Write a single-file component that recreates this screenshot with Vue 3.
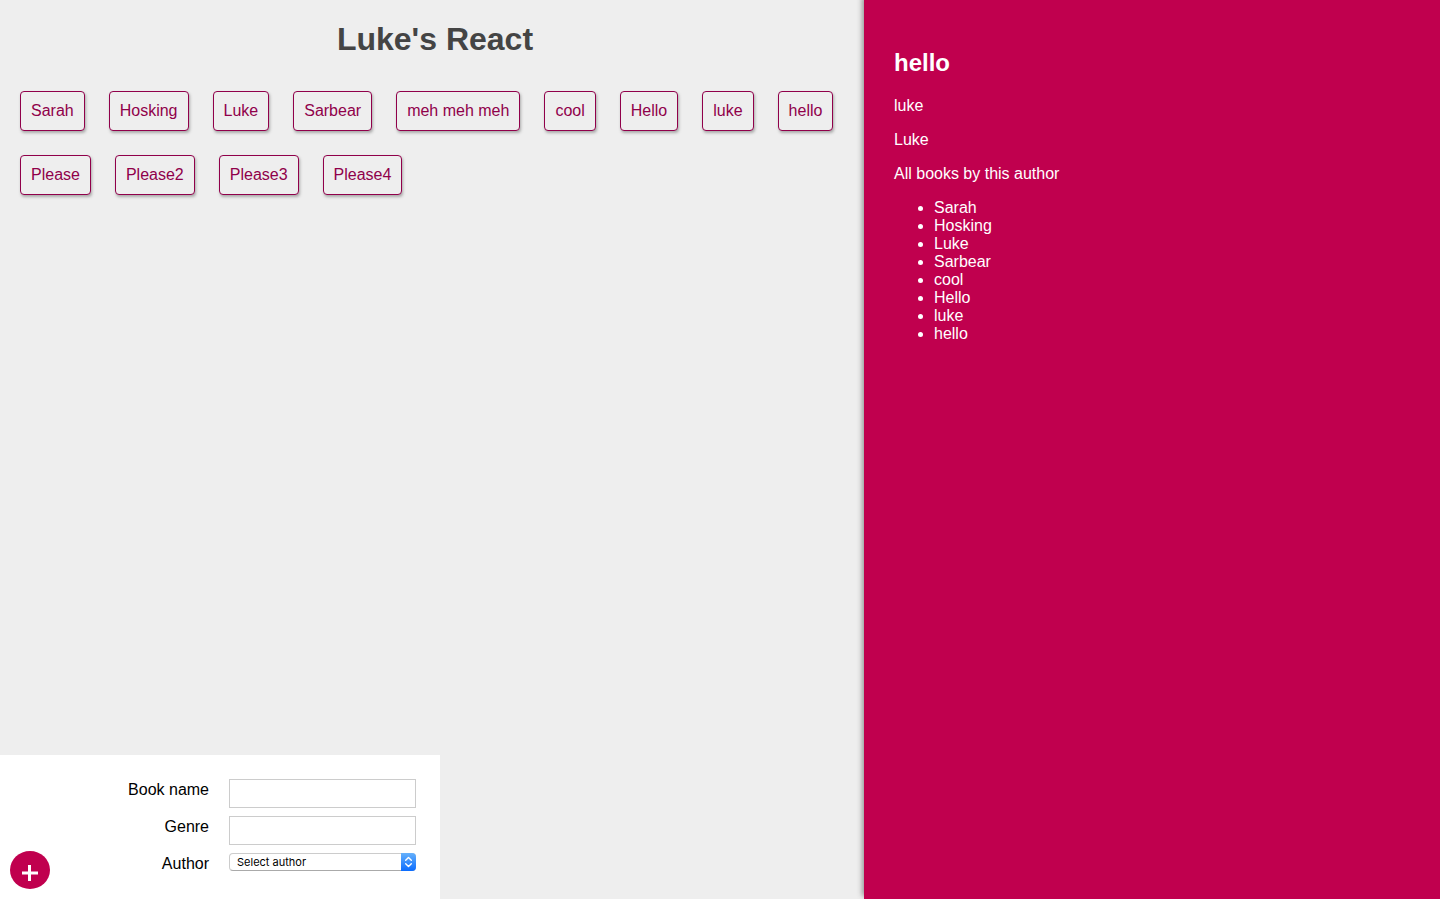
<script setup>
import { ref } from 'vue'

const books = ref([
  'Sarah', 'Hosking', 'Luke', 'Sarbear', 'meh meh meh', 'cool', 'Hello',
  'luke', 'hello', 'Please', 'Please2', 'Please3', 'Please4',
])
const selected = ref({
  name: 'hello',
  genre: 'luke',
  author: 'Luke',
  books: ['Sarah', 'Hosking', 'Luke', 'Sarbear', 'cool', 'Hello', 'luke', 'hello'],
})
const name = ref('')
const genre = ref('')
const author = ref('')
</script>

<template>
  <div class="app">
    <main class="main">
      <h1 class="title">Luke's React</h1>
      <div class="books">
        <button v-for="book in books" :key="book" type="button" class="book">{{ book }}</button>
      </div>
      <form class="form" @submit.prevent>
        <button type="submit" class="add" aria-label="Add book">
          <svg width="16" height="16" viewBox="0 0 16 16" aria-hidden="true">
            <path d="M7.5 0v16M0 8h16" stroke="#fff" stroke-width="3" />
          </svg>
        </button>
        <div class="fields">
          <label for="name">Book name</label>
          <input id="name" v-model="name" type="text" />
          <label for="genre">Genre</label>
          <input id="genre" v-model="genre" type="text" />
          <label for="author">Author</label>
          <div class="select">
            <select id="author" v-model="author">
              <option value="">Select author</option>
              <option value="luke">Luke</option>
            </select>
            <span class="arrows">
              <svg width="15" height="18" viewBox="0 0 15 18" aria-hidden="true">
                <path d="M4.7 7.2 7.5 4.4l2.8 2.8M4.7 10.8l2.8 2.8 2.8-2.8" fill="none" stroke="#fff" stroke-width="1.4" stroke-linecap="round" stroke-linejoin="round" />
              </svg>
            </span>
          </div>
        </div>
      </form>
    </main>
    <aside class="details">
      <h2>{{ selected.name }}</h2>
      <p>{{ selected.genre }}</p>
      <p>{{ selected.author }}</p>
      <p>All books by this author</p>
      <ul>
        <li v-for="book in selected.books" :key="book">{{ book }}</li>
      </ul>
    </aside>
  </div>
</template>

<style>
body {
  margin: 0;
  background: #eee;
}
</style>

<style scoped>
.app {
  display: grid;
  grid-template-columns: 3fr 2fr;
  min-height: 100vh;
  font: 16px/18px "Liberation Sans", Arial, sans-serif;
}
.main {
  display: flex;
  flex-direction: column;
  background: #eee;
}
.title {
  margin: 20px 0 32px;
  padding-left: 6px;
  font-size: 32px;
  line-height: 39px;
  text-align: center;
  color: #444;
}
.books {
  display: flex;
  flex-wrap: wrap;
  gap: 24px;
  padding: 0 20px;
}
.book {
  padding: 10px;
  border: 1px solid #90004a;
  border-radius: 4px;
  background: #eee;
  color: #90004a;
  font: inherit;
  box-shadow: 1px 2px 3px #aaa;
}
.form {
  box-sizing: border-box;
  display: flex;
  justify-content: space-between;
  align-items: flex-end;
  align-self: flex-start;
  width: 440px;
  margin-top: auto;
  padding: 24px 24px 10px 10px;
  background: #fff;
}
.add {
  display: flex;
  justify-content: center;
  width: 40px;
  height: 38px;
  padding: 14px 0 0;
  border: 0;
  border-radius: 50%;
  background: #c0004e;
}
.fields {
  display: grid;
  grid-template-columns: auto 187px;
  gap: 8px 20px;
  margin-bottom: 18px;
  text-align: right;
}
.fields label {
  padding-top: 2px;
}
.fields label[for="author"] {
  height: 16px;
}
.fields input {
  box-sizing: border-box;
  width: 100%;
  height: 29px;
  padding: 4px;
  border: 1px solid #ccc;
  font: inherit;
}
.select {
  position: relative;
  height: 18px;
}
.select select {
  appearance: none;
  display: block;
  box-sizing: border-box;
  width: 100%;
  height: 18px;
  padding: 0 20px 0 7px;
  border: 1px solid #ccc;
  border-bottom-color: #aaa;
  border-radius: 4px;
  background: #fff;
  color: #000;
  font: 11px/16px Inter, sans-serif;
}
.arrows {
  position: absolute;
  top: 0;
  right: 0;
  height: 18px;
  border-radius: 0 4px 4px 0;
  background: linear-gradient(#66b1fb, #0a6cff);
  pointer-events: none;
}
.arrows svg {
  display: block;
}
.details {
  padding: 30px;
  background: #c0004e;
  color: #fff;
  box-shadow: -2px -3px 5px #999;
}
.details h2 {
  margin: 20px 0 22px;
  font-size: 24px;
  line-height: 25px;
}
.details p {
  margin: 16px 0;
}
.details ul {
  margin: 16px 0;
  padding-left: 40px;
}
</style>
